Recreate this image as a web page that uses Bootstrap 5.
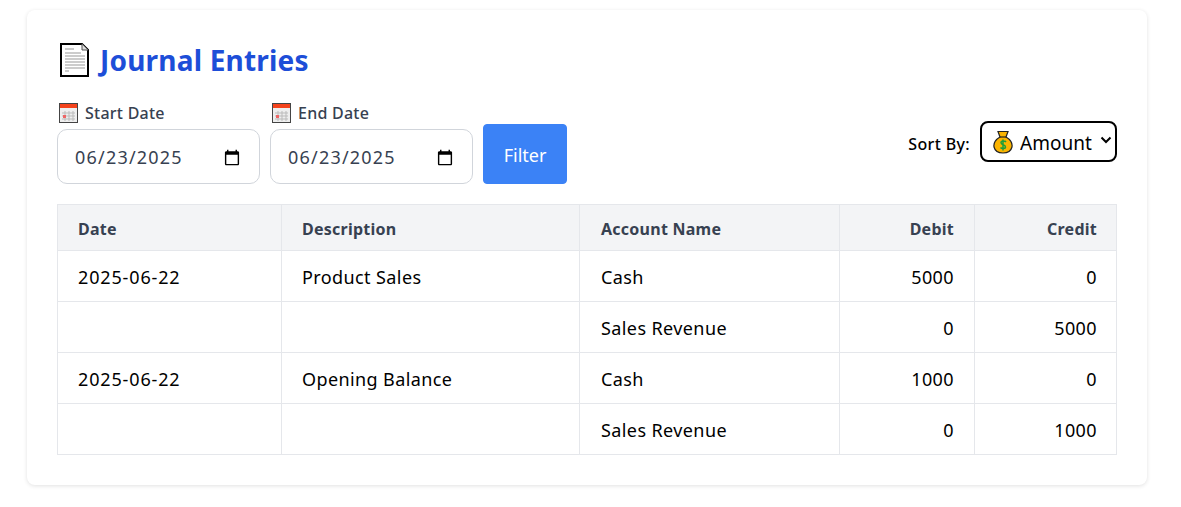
<!DOCTYPE html>
<html lang="en">
<head>
    <meta charset="UTF-8">
    <meta name="viewport" content="width=device-width, initial-scale=1.0">
    <title>Journal Entries</title>
    <link href="https://cdn.jsdelivr.net/npm/bootstrap@5.3.2/dist/css/bootstrap.min.css" rel="stylesheet">
    <script src="https://cdn.jsdelivr.net/npm/bootstrap@5.3.2/dist/js/bootstrap.bundle.min.js"></script>
    <style>
        body {
            font-family: "Noto Sans", "Open Sans", sans-serif;
            background-color: #fff;
            color: #000;
        }
        .page-wrap {
            padding: 10px 34px 22px 27px;
        }
        .journal-card {
            background-color: #fff;
            border-radius: 8px;
            box-shadow: 0 1px 4px rgba(0, 0, 0, 0.12);
            padding: 30px;
            height: 475px;
        }
        .journal-title {
            font-size: 28px;
            font-weight: 700;
            letter-spacing: 0.2px;
            color: #1d4ed8;
            line-height: 42px;
            margin-top: -1px;
            margin-bottom: 20px;
            gap: 10px;
        }
        .filter-row {
            gap: 10px;
        }
        .filter-label {
            font-size: 16px;
            font-weight: 500;
            letter-spacing: 0.25px;
            color: #374151;
            line-height: 24px;
            margin-bottom: 4px;
            gap: 6px;
        }
        .date-box {
            width: 203px;
            height: 55px;
            border: 1px solid #d1d5db;
            border-radius: 10px;
            padding: 2px 16px 0 17px;
            font-size: 18px;
            letter-spacing: 1.2px;
            color: #374151;
            font-family: inherit;
        }
        .filter-btn {
            width: 84px;
            height: 60px;
            padding-top: 8px;
            background-color: #3b82f6;
            border-color: #3b82f6;
            border-radius: 4px;
            font-size: 18px;
        }
        .sort-wrap {
            margin-bottom: 22px;
            gap: 10px;
        }
        .sort-label {
            font-size: 16px;
            font-weight: 500;
            letter-spacing: 0.35px;
            color: #000;
            padding-top: 5px;
        }
        .sort-icon {
            position: absolute;
            left: 13px;
            top: 9px;
        }
        .sort-arrow {
            position: absolute;
            right: 5px;
            top: 15px;
            pointer-events: none;
        }
        .sort-select {
            display: block;
            appearance: none;
            width: 137px;
            height: 41px;
            border: 2px solid #000;
            border-radius: 8px;
            padding: 4px 0 0 38px;
            font-size: 19px;
            background-color: #fff;
            font-family: inherit;
        }
        .journal-table {
            margin-top: 20px;
            margin-bottom: 0;
            width: 1060px;
            table-layout: fixed;
            border-color: #e5e7eb;
        }
        .journal-table th, .journal-table td {
            padding: 3px 20px 0;
            vertical-align: middle;
            height: 51px;
            font-size: 18px;
            font-weight: 400;
            letter-spacing: 0.4px;
            color: #000;
        }
        .journal-table td.date-cell {
            letter-spacing: 0.85px;
        }
        .journal-table th:nth-child(3), .journal-table td:nth-child(3) {
            padding-left: 21px;
        }
        .journal-table th:last-child, .journal-table td:last-child {
            padding-right: 19px;
        }
        .journal-table thead th {
            height: 46px;
            font-size: 16px;
            font-weight: 700;
            letter-spacing: 0.25px;
            color: #374151;
            background-color: #f3f4f6;
        }
    </style>
</head>
<body>
    <div class="page-wrap">
        <div class="journal-card">
            <h1 class="journal-title d-flex align-items-center">
                <svg width="33" height="36" viewBox="0 0 33 36">
                    <path d="M4 2H25L31 8V34H4Z" fill="#fff" stroke="#000" stroke-width="2"/>
                    <path d="M25 2V8H31" fill="#ddd" stroke="#555" stroke-width="1"/>
                    <path d="M8 7H17M8 11H24M8 14H28M8 17H28M8 20H28M8 23H28M8 26H28M8 29H12" stroke="#999" stroke-width="1"/>
                </svg>
                Journal Entries
            </h1>
            <div class="d-flex justify-content-between align-items-end">
                <div class="d-flex align-items-end filter-row">
                    <div>
                        <div class="filter-label d-flex align-items-center">
                            <svg width="22" height="20" viewBox="-2 0 22 20">
                                <rect x="0.5" y="0.5" width="18" height="19" fill="#eee" stroke="#444"/>
                                <rect x="1" y="1" width="17" height="4" fill="#f4431c"/>
                                <path d="M6 8V18M10 8V18M14 8V18M3 10H16M3 13H16M3 16H16" stroke="#bbb" stroke-width="1"/>
                                <rect x="4" y="12" width="3" height="3" fill="#e66"/>
                            </svg>
                            Start Date
                        </div>
                        <input type="date" class="date-box" value="2025-06-23">
                    </div>
                    <div>
                        <div class="filter-label d-flex align-items-center">
                            <svg width="22" height="20" viewBox="-2 0 22 20">
                                <rect x="0.5" y="0.5" width="18" height="19" fill="#eee" stroke="#444"/>
                                <rect x="1" y="1" width="17" height="4" fill="#f4431c"/>
                                <path d="M6 8V18M10 8V18M14 8V18M3 10H16M3 13H16M3 16H16" stroke="#bbb" stroke-width="1"/>
                                <rect x="4" y="12" width="3" height="3" fill="#e66"/>
                            </svg>
                            End Date
                        </div>
                        <input type="date" class="date-box" value="2025-06-23">
                    </div>
                    <button type="button" class="btn btn-primary filter-btn">Filter</button>
                </div>
                <div class="sort-wrap d-flex align-items-center">
                    <span class="sort-label">Sort By:</span>
                    <div class="position-relative">
                        <svg class="sort-icon" width="20" height="24" viewBox="0 0 20 24">
                            <path d="M5 1.5H15L13 7C18 10 19.5 14 19 17C18 21 14 23 10 23C6 23 2 21 1 17C.5 14 2 10 7 7Z" fill="#fbb400" stroke="#222" stroke-width="1.2"/>
                            <path d="M6.5 7H13.5" stroke="#222" stroke-width="1.2"/>
                            <path d="M13 12C12 10.5 8 10.5 8 12.8C8 15 12.5 14.5 12.5 17C12.5 19 8.5 19 7.5 17.5M10 9.5V20.5" fill="none" stroke="#1f9e3a" stroke-width="1.5"/>
                        </svg>
                        <select class="sort-select">
                            <option>Amount</option>
                            <option>Date</option>
                        </select>
                        <svg class="sort-arrow" width="12" height="8" viewBox="0 0 12 8">
                            <path d="M1.5 1.5L6 6L10.5 1.5" fill="none" stroke="#000" stroke-width="2"/>
                        </svg>
                    </div>
                </div>
            </div>
            <table class="table table-bordered journal-table">
                <colgroup>
                    <col width="224"><col width="298"><col width="260"><col width="135"><col width="142">
                </colgroup>
                <thead>
                    <tr>
                        <th>Date</th>
                        <th>Description</th>
                        <th>Account Name</th>
                        <th class="text-end">Debit</th>
                        <th class="text-end">Credit</th>
                    </tr>
                </thead>
                <tbody>
                    <tr><td class="date-cell">2025-06-22</td><td>Product Sales</td><td>Cash</td><td class="text-end">5000</td><td class="text-end">0</td></tr>
                    <tr><td></td><td></td><td>Sales Revenue</td><td class="text-end">0</td><td class="text-end">5000</td></tr>
                    <tr><td class="date-cell">2025-06-22</td><td>Opening Balance</td><td>Cash</td><td class="text-end">1000</td><td class="text-end">0</td></tr>
                    <tr><td></td><td></td><td>Sales Revenue</td><td class="text-end">0</td><td class="text-end">1000</td></tr>
                </tbody>
            </table>
        </div>
    </div>
</body>
</html>
